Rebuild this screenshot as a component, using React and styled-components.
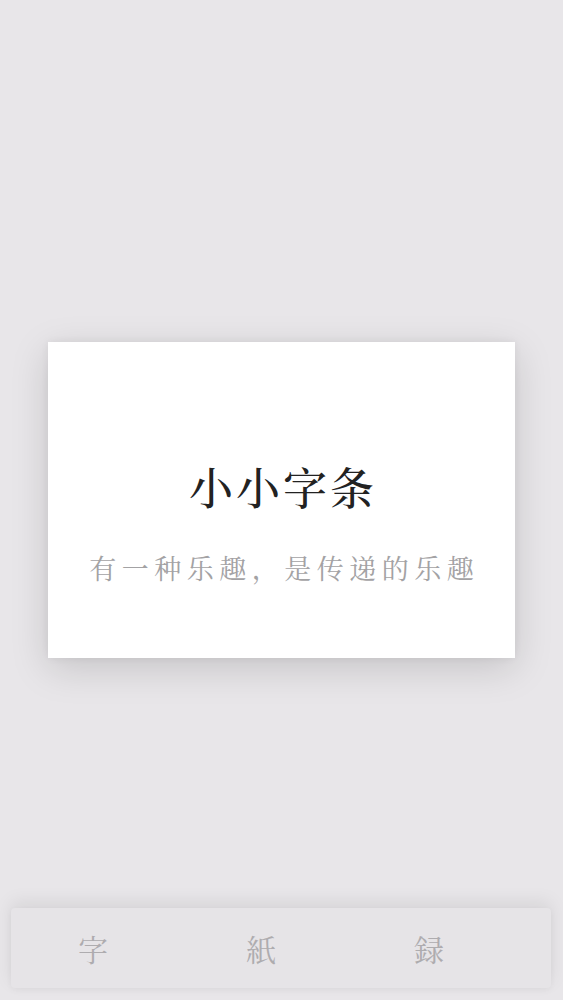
import React from 'react';
import styled, {createGlobalStyle} from 'styled-components';

const GlobalStyle = createGlobalStyle`
  html, body {
    margin: 0;
    padding: 0;
    background: #e8e6e9;
  }
  body {
    font-family: "Noto Serif CJK SC", "Noto Sans CJK SC", "Noto Sans CJK JP", serif;
  }
`;

const Page = styled.div`
  min-height: 1000px;
  display: flex;
  flex-direction: column;
  background: #e8e6e9;
`;

const Main = styled.main`
  flex: 1;
  display: flex;
  align-items: center;
  justify-content: center;
  padding-top: 92px;
`;

const Card = styled.section`
  width: 467px;
  height: 316px;
  box-sizing: border-box;
  padding-top: 120px;
  background: #fff;
  box-shadow: 0 10px 36px rgba(0, 0, 0, 0.15), 0 0 8px rgba(0, 0, 0, 0.06);
  display: flex;
  flex-direction: column;
  align-items: center;
`;

const Title = styled.h1`
  margin: 0;
  font-size: 44px;
  line-height: 48px;
  font-weight: 500;
  letter-spacing: 3px;
  text-indent: 3px;
  color: #222;
`;

const Subtitle = styled.p`
  margin: 43px 0 0;
  font-size: 27px;
  line-height: 30px;
  font-weight: 400;
  letter-spacing: 5.5px;
  text-indent: 5.5px;
  color: #a3a2a4;
`;

const TabBar = styled.nav`
  margin: 0 12px 12px 11px;
  height: 80px;
  border-radius: 4px;
  background: #e6e4e7;
  box-shadow: 0 -6px 18px rgba(0, 0, 0, 0.08), 0 2px 6px rgba(0, 0, 0, 0.04);
  display: grid;
  grid-template-columns: repeat(3, 168px);
  padding-left: 0;
  align-items: center;
`;

const Tab = styled.button`
  border: none;
  background: transparent;
  padding: 0 4px 0 0;
  font-family: "Noto Serif CJK JP", "Noto Sans CJK JP", "Noto Sans CJK SC", serif;
  font-size: 30px;
  color: ${p => (p.active ? '#8f8d90' : '#aeacaf')};
  text-align: center;
  cursor: pointer;
`;

const tabs = ['字', '紙', '録'];

export default function App() {
  return (
    <Page>
      <GlobalStyle />
      <Main>
        <Card>
          <Title>小小字条</Title>
          <Subtitle>有一种乐趣，是传递的乐趣</Subtitle>
        </Card>
      </Main>
      <TabBar>
        {tabs.map(t => (
          <Tab key={t}>{t}</Tab>
        ))}
      </TabBar>
    </Page>
  );
}
